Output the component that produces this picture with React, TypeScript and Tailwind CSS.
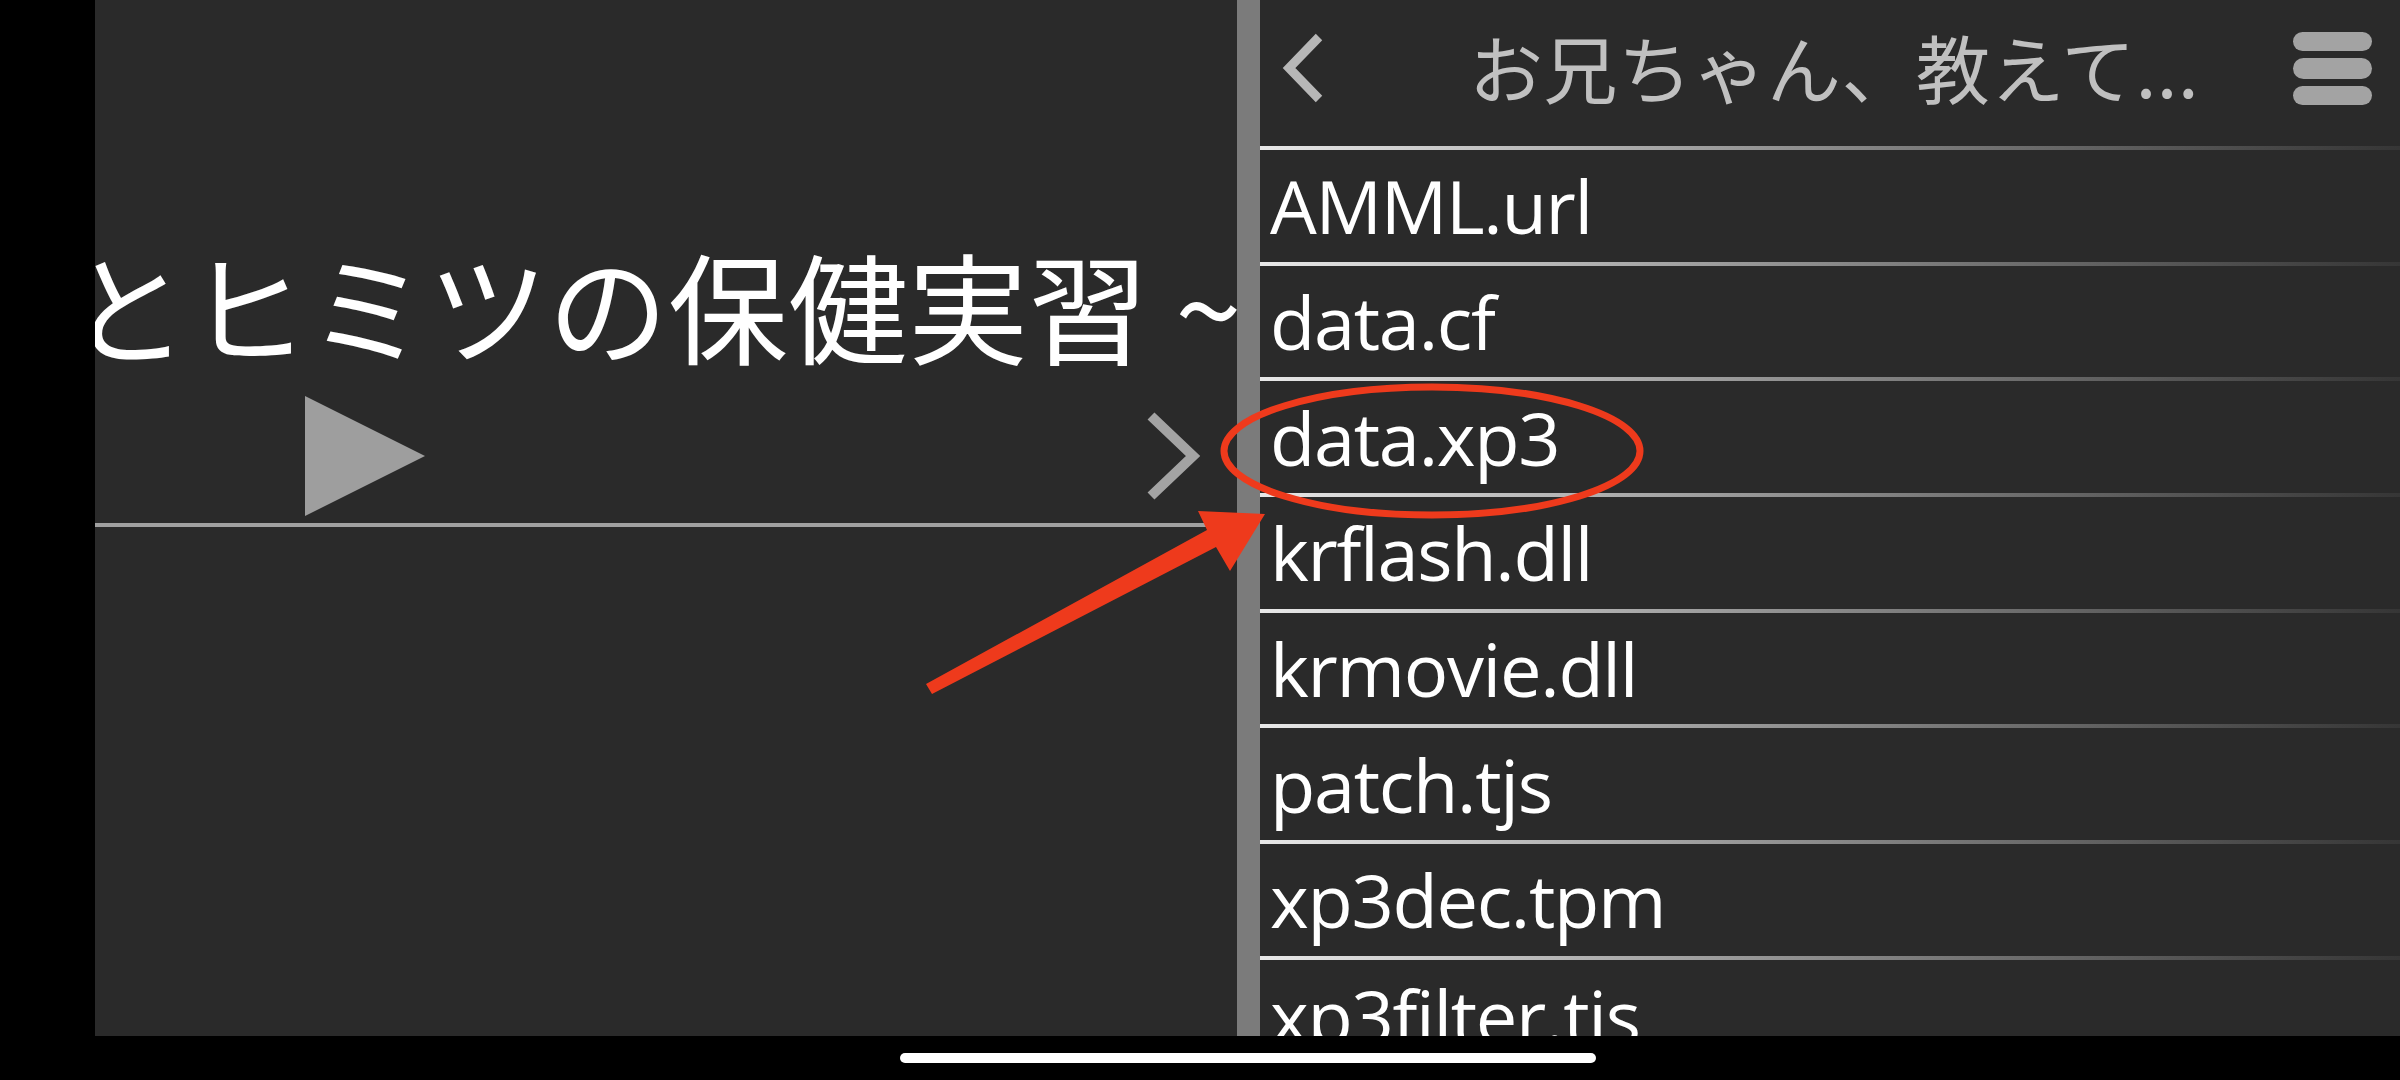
const files = [
  'AMML.url',
  'data.cf',
  'data.xp3',
  'krflash.dll',
  'krmovie.dll',
  'patch.tjs',
  'xp3dec.tpm',
  'xp3filter.tjs',
];

function PlayerPanel() {
  return (
    <div className="flex w-[1142px] shrink-0 flex-col overflow-hidden bg-[#2a2a2a] pt-[244px]">
      {/* scrolling title, clipped on both sides */}
      <div className="ml-[-27px] h-[120px] whitespace-nowrap font-['Noto_Sans_CJK_JP',sans-serif] text-[120px] leading-none text-white">
        とヒミツの保健実習 ~
      </div>

      {/* play + next */}
      <div className="mt-[32px] flex h-[120px] items-center">
        <svg width="120" height="120" viewBox="0 0 120 120" className="ml-[210px] shrink-0">
          <polygon points="0,0 120,60 0,120" fill="#9e9e9e" />
        </svg>
        <svg width="56" height="92" viewBox="0 0 56 92" className="ml-auto mr-[36px] shrink-0">
          <polyline
            points="6,6 48,46 6,86"
            fill="none"
            stroke="#a3a3a3"
            strokeWidth="10"
            strokeLinejoin="miter"
          />
        </svg>
      </div>

      <div className="mt-[7px] h-[4px] w-[1112px] bg-[#a0a0a0]" />
    </div>
  );
}

function FileBrowser() {
  return (
    <div className="flex min-w-0 flex-1 flex-col overflow-hidden bg-[#2a2a2a]">
      {/* header */}
      <div className="flex h-[146px] shrink-0 items-start">
        <svg width="48" height="80" viewBox="0 0 48 80" className="ml-[20px] mt-[28px] shrink-0">
          <polyline
            points="39,9 9,40 39,71"
            fill="none"
            stroke="#b7b7b7"
            strokeWidth="9"
            strokeLinejoin="miter"
          />
        </svg>
        <div className="ml-[141px] mt-[29px] whitespace-nowrap font-['Noto_Sans_CJK_JP',sans-serif] text-[74px] leading-none tracking-[0.5px] text-[#c0c0c0]">
          お兄ちゃん、教えて...
        </div>
        <div className="ml-auto mr-[28px] mt-[32px] flex w-[79px] flex-col gap-[7px]">
          <div className="h-[19px] rounded-full bg-[#a3a3a3]" />
          <div className="h-[21px] rounded-full bg-[#a3a3a3]" />
          <div className="h-[19px] rounded-full bg-[#a3a3a3]" />
        </div>
      </div>

      {/* file list */}
      {files.map((name) => (
        <div key={name} className="flex h-[115.7px] shrink-0 flex-col">
          <div className="h-[4px] shrink-0 bg-linear-to-r from-[#e8e8e8] to-[#363636]" />
          <div className="flex flex-1 items-center pl-[10px] font-['Open_Sans',sans-serif] text-[74px] tracking-[-1.3px] text-white">
            {name}
          </div>
        </div>
      ))}
    </div>
  );
}

function Annotation() {
  return (
    <svg
      width="2400"
      height="1080"
      viewBox="0 0 2400 1080"
      className="pointer-events-none absolute left-0 top-0"
    >
      <ellipse cx="1432" cy="451" rx="208" ry="64" fill="none" stroke="#ee3a1c" strokeWidth="7" />
      <polygon
        points="926,684 1207,530 1198,511 1265,514 1230,571 1216,547 932,694"
        fill="#ee3a1c"
      />
    </svg>
  );
}

export default function App() {
  return (
    <div className="relative flex h-[1080px] w-[2400px] flex-col overflow-hidden bg-black">
      <div className="flex h-[1036px] shrink-0">
        <div className="w-[95px] shrink-0 bg-black" />
        <PlayerPanel />
        <div className="w-[23px] shrink-0 bg-[#7b7b7b]" />
        <FileBrowser />
      </div>
      <div className="flex h-[44px] shrink-0 pl-[900px] pt-[17px]">
        <div className="h-[10px] w-[696px] rounded-full bg-white" />
      </div>
      <Annotation />
    </div>
  );
}
